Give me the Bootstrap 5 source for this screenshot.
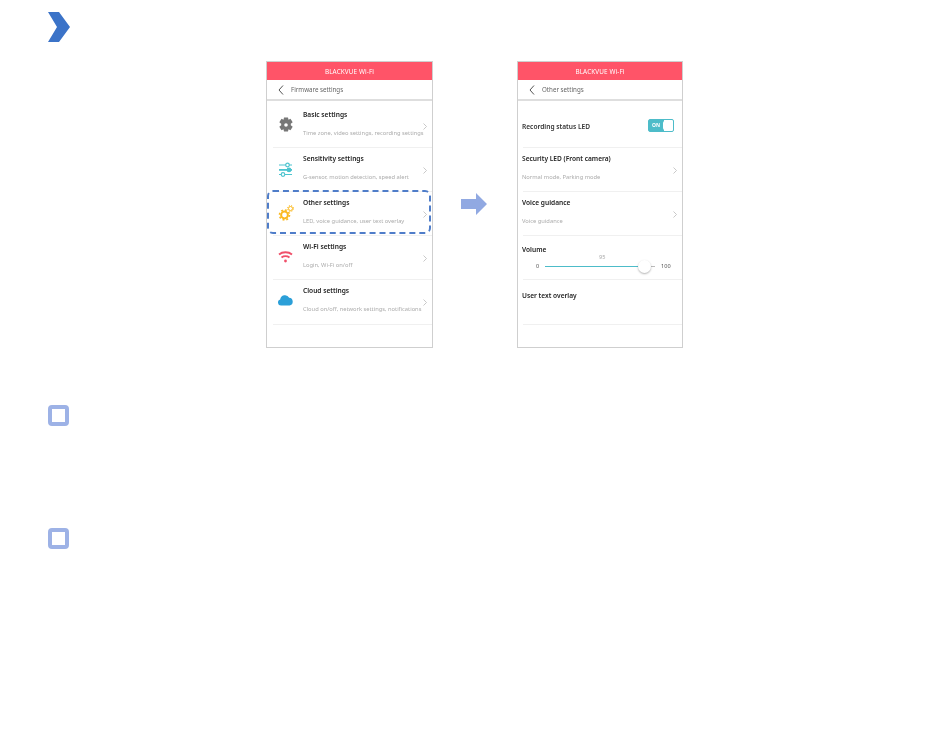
<!DOCTYPE html>
<html lang="en">
<head>
<meta charset="UTF-8">
<meta name="viewport" content="width=device-width, initial-scale=1">
<title>Firmware settings</title>
<link rel="stylesheet" href="https://cdn.jsdelivr.net/npm/bootstrap@5.3.0/dist/css/bootstrap.min.css">
<style>
body { background: #fff; font-family: "Noto Sans", "Liberation Sans", sans-serif; }
.page-wrap { width: 950px; height: 744px; overflow: hidden; padding: 12px 0 0 47px; }
.head-mark { display: block; width: 24px; height: 30px; }
.shots { margin-top: 19px; margin-left: 219px; }
.phone { width: 167px; height: 287px; border: 1px solid #cfcfcf; background: #fff; flex: none; filter: blur(.3px); }
.phone-narrow { width: 166px; }
.phone-top { height: 18px; background: #ff5468; color: #fff; font-size: 6.4px; line-height: 19px; text-align: center; letter-spacing: .1px; }
.phone-sub { height: 21px; padding-left: 11px; border-bottom: 2px solid #dedede; font-size: 6.2px; color: #666; gap: 7px; margin-bottom: 3px; }
.set-row { height: 44px; margin-left: 6px; border-bottom: 1px solid #f0f0f0; position: relative; }
.set-title { position: absolute; top: 6px; font-size: 6.6px; font-weight: 600; color: #222; line-height: 10px; white-space: nowrap; }
.set-desc { position: absolute; top: 24px; font-size: 5.75px; color: #ababab; line-height: 10px; white-space: nowrap; }
.with-ico { left: 30px; }
.no-ico { left: -1px; }
.row-arrow { position: absolute; right: 5px; top: 19px; width: 4px; height: 7px; }
.dash-box { position: absolute; left: -6px; right: 1px; top: -2px; bottom: 1px; border: 2px dashed #4f7dc9; border-radius: 6px; }
.go-arrow { width: 84px; flex: none; padding-top: 132px; padding-left: 28px; }
.go-arrow svg { display: block; }
.led-label { position: absolute; top: 18px; left: -1px; font-size: 6.6px; font-weight: 600; color: #333; line-height: 10px; }
.led-switch { position: absolute; right: 8px; top: 15px; width: 26px; height: 13px; border: 1px solid #4dbcc9; border-radius: 2px; background: linear-gradient(90deg, #4dbcc9 62%, #fff 62%); color: #fff; font-size: 5px; font-weight: 700; line-height: 11px; padding-left: 3px; }
.vol-wrap { position: absolute; left: 0; right: 0; top: 18px; height: 20px; font-size: 5.6px; color: #555; }
.vol-track { position: absolute; left: 22px; top: 12px; width: 100px; height: 1px; background: #4dbcc9; }
.vol-rest { position: absolute; left: 122px; top: 12px; width: 10px; height: 1px; background: #bbb; }
.vol-knob { position: absolute; left: 115px; top: 6px; width: 13px; height: 13px; border-radius: 50%; background: #fff; box-shadow: 0 1px 2px rgba(0,0,0,.3); }
.note-mark { width: 21px; height: 21px; margin-left: 1px; border: 4px solid #9db2e6; border-radius: 4px; background: #fff; }
.note-one { margin-top: 57px; }
.note-two { margin-top: 102px; }
</style>
</head>
<body>
<div class="page-wrap">
  <svg class="head-mark" viewBox="0 0 24 30"><path d="M1 0H12L23 15 12 30H1L10 15Z" fill="#3b73c8"/></svg>

  <div class="shots d-flex">
    <div class="phone">
      <div class="phone-top">BLACKVUE Wi-Fi</div>
      <div class="phone-sub d-flex align-items-center">
        <svg width="6" height="10" viewBox="0 0 6 10"><path d="M5 .5 1 5l4 4.500" fill="none" stroke="#555" stroke-width="1"/></svg>
        <span>Firmware settings</span>
      </div>
      <div class="set-row">
        <svg class="position-absolute" style="left:5px;top:13px" width="16" height="16" viewBox="0 0 16 16"><path fill-rule="evenodd" d="M6 .5h4l.5 2.300 2-1 2.200 3.400-1.900 1.500v1.600l1.900 1.500-2.200 3.400-2-1-.5 2.300H6l-.5-2.300-2 1-2.200-3.400 1.900-1.500V6.700L1.300 5.200l2.200-3.400 2 1ZM8 6.200a1.800 1.800 0 1 0 0 3.600 1.800 1.800 0 0 0 0-3.600Z" fill="#777"/></svg>
        <div class="set-title with-ico">Basic settings</div>
        <div class="set-desc with-ico">Time zone, video settings, recording settings</div>
        <svg class="row-arrow" viewBox="0 0 4 7"><path d="M.5.5 3.500 3.500.5 6.500" fill="none" stroke="#bbb" stroke-width=".8"/></svg>
      </div>
      <div class="set-row">
        <svg class="position-absolute" style="left:5px;top:14px" width="15" height="16" viewBox="0 0 15 16"><g fill="none" stroke="#4dc4cf" stroke-width="1.200"><path d="M1 3h13M1 12.500h13"/><circle cx="9.500" cy="3" r="1.800" fill="#fff"/><circle cx="5" cy="12.500" r="1.800" fill="#fff"/></g><path d="M1 7h13v1.800H1z" fill="#4dc4cf"/><circle cx="11" cy="7.900" r="2.400" fill="#4dc4cf"/></svg>
        <div class="set-title with-ico">Sensitivity settings</div>
        <div class="set-desc with-ico">G-sensor, motion detection, speed alert</div>
        <svg class="row-arrow" viewBox="0 0 4 7"><path d="M.5.5 3.500 3.500.5 6.500" fill="none" stroke="#bbb" stroke-width=".8"/></svg>
      </div>
      <div class="set-row">
        <svg class="position-absolute" style="left:5px;top:12px" width="16" height="17" viewBox="0 0 16 17"><circle cx="6.500" cy="11" r="3.400" fill="none" stroke="#fbb91f" stroke-width="2"/><circle cx="6.500" cy="11" r="5" fill="none" stroke="#fbb91f" stroke-width="1.600" stroke-dasharray="1.900 2"/><circle cx="12.500" cy="4.500" r="2" fill="none" stroke="#fbb91f" stroke-width="1"/><circle cx="12.500" cy="4.500" r="3" fill="none" stroke="#fbb91f" stroke-width="1" stroke-dasharray="1.200 1.200"/></svg>
        <div class="set-title with-ico">Other settings</div>
        <div class="set-desc with-ico">LED, voice guidance, user text overlay</div>
        <svg class="row-arrow" viewBox="0 0 4 7"><path d="M.5.5 3.500 3.500.5 6.500" fill="none" stroke="#bbb" stroke-width=".8"/></svg>
        <div class="dash-box"></div>
      </div>
      <div class="set-row">
        <svg class="position-absolute" style="left:5px;top:15px" width="15" height="12" viewBox="0 0 15 12"><g fill="none" stroke="#f0506a" stroke-width="1.800"><path d="M1 3.500c3.500-3 9.500-3 13 0"/><path d="M3.500 6.500c2.200-1.700 5.800-1.700 8 0"/></g><circle cx="7.500" cy="10" r="1.400" fill="#f0506a"/></svg>
        <div class="set-title with-ico">Wi-Fi settings</div>
        <div class="set-desc with-ico">Login, Wi-Fi on/off</div>
        <svg class="row-arrow" viewBox="0 0 4 7"><path d="M.5.5 3.500 3.500.5 6.500" fill="none" stroke="#bbb" stroke-width=".8"/></svg>
      </div>
      <div class="set-row" style="height:45px">
        <svg class="position-absolute" style="left:5px;top:14px" width="15" height="12" viewBox="0 0 15 12"><path d="M3 11.500a3 3 0 0 1-.8-5.900A4.800 4.800 0 0 1 11.200 3.800a3.900 3.900 0 0 1 .4 7.700Z" fill="#2b9fd8"/></svg>
        <div class="set-title with-ico">Cloud settings</div>
        <div class="set-desc with-ico">Cloud on/off, network settings, notifications</div>
        <svg class="row-arrow" viewBox="0 0 4 7"><path d="M.5.5 3.500 3.500.5 6.500" fill="none" stroke="#bbb" stroke-width=".8"/></svg>
      </div>
    </div>

    <div class="go-arrow">
      <svg width="26" height="22" viewBox="0 0 26 22"><path d="M0 6H15V0L26 11 15 22V16H0Z" fill="#91a9e2"/></svg>
    </div>

    <div class="phone phone-narrow">
      <div class="phone-top">BLACKVUE Wi-Fi</div>
      <div class="phone-sub d-flex align-items-center">
        <svg width="6" height="10" viewBox="0 0 6 10"><path d="M5 .5 1 5l4 4.500" fill="none" stroke="#555" stroke-width="1"/></svg>
        <span>Other settings</span>
      </div>
      <div class="set-row" style="margin-left:5px">
        <div class="led-label">Recording status LED</div>
        <div class="led-switch">ON<span class="position-absolute" style="right:1px;top:1px;width:9px;height:9px;background:#fff;border-radius:2px"></span></div>
      </div>
      <div class="set-row" style="margin-left:5px">
        <div class="set-title no-ico">Security LED (Front camera)</div>
        <div class="set-desc no-ico">Normal mode, Parking mode</div>
        <svg class="row-arrow" viewBox="0 0 4 7"><path d="M.5.5 3.500 3.500.5 6.500" fill="none" stroke="#bbb" stroke-width=".8"/></svg>
      </div>
      <div class="set-row" style="margin-left:5px">
        <div class="set-title no-ico">Voice guidance</div>
        <div class="set-desc no-ico">Voice guidance</div>
        <svg class="row-arrow" viewBox="0 0 4 7"><path d="M.5.5 3.500 3.500.5 6.500" fill="none" stroke="#bbb" stroke-width=".8"/></svg>
      </div>
      <div class="set-row" style="margin-left:5px">
        <div class="set-title no-ico" style="top:9px">Volume</div>
        <div class="vol-wrap">
          <span class="position-absolute" style="left:13px;top:8px">0</span>
          <span class="position-absolute" style="left:76px;top:-1px;color:#aaa">95</span>
          <div class="vol-track"></div>
          <div class="vol-rest"></div>
          <div class="vol-knob"></div>
          <span class="position-absolute" style="left:138px;top:8px">100</span>
        </div>
      </div>
      <div class="set-row" style="margin-left:5px;height:45px">
        <div class="set-title no-ico" style="top:11px">User text overlay</div>
      </div>
    </div>
  </div>

  <div class="note-mark note-one"></div>
  <div class="note-mark note-two"></div>
</div>
<script src="https://cdn.jsdelivr.net/npm/bootstrap@5.3.0/dist/js/bootstrap.bundle.min.js"></script>
</body>
</html>
